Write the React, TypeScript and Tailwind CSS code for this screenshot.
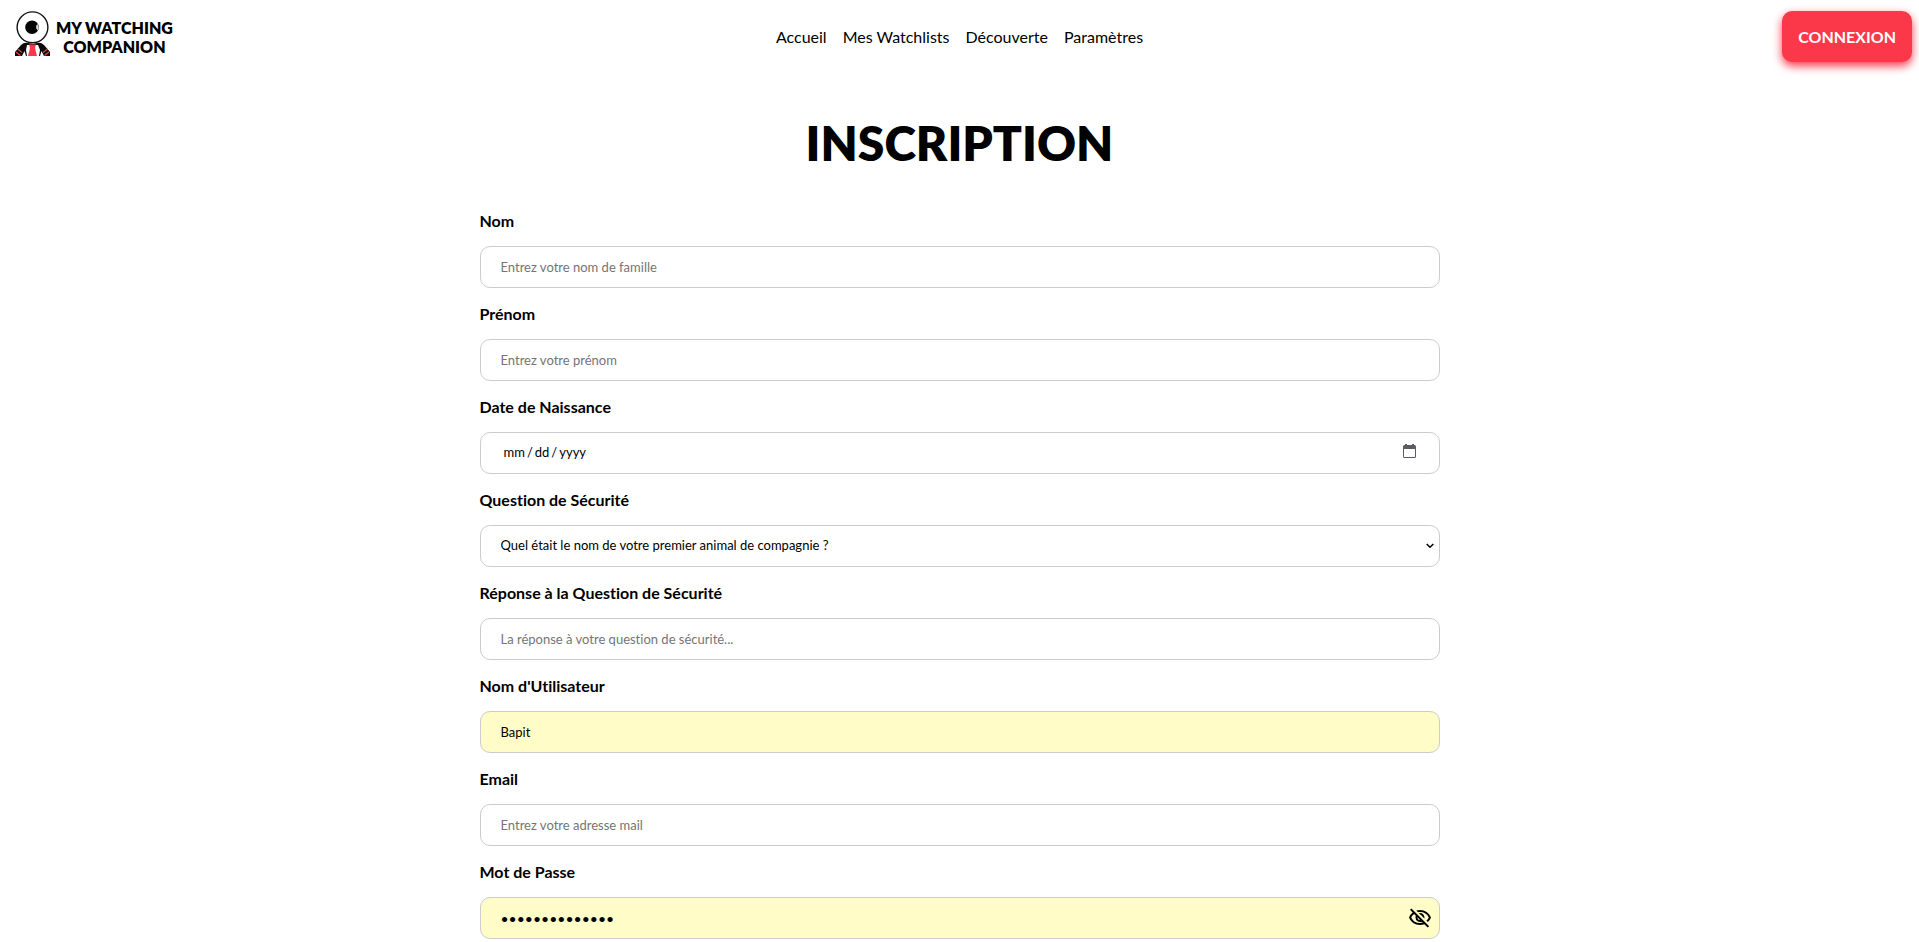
import { useState, type ReactNode } from "react";
import { MdOutlineVisibilityOff, MdOutlineVisibility } from "react-icons/md";

const links = ["Accueil", "Mes Watchlists", "Découverte", "Paramètres"];

const control =
  "block h-[42px] w-full rounded-[10px] border border-[#ccc] px-5 text-black outline-none placeholder:text-[#757575] focus:border-[#fa384a]";

function Mascot() {
  return (
    <svg viewBox="0 0 36 46" className="mb-[5px] h-[46px] w-9" aria-hidden="true">
      <path d="M0 45V41L6 34Q9 31 13 32L18 33L22 32Q26 31 29 34L35 41V45Z" fill="#0b0b0b" />
      <path d="M12 34L18 34L23 34L25 39L24 45H12L11 39Z" fill="#fff" />
      <path d="M14 33.500H21L20 37L22 45H13L15 37Z" fill="#fa384a" />
      <path d="M7 45L9.500 40L11 45ZM29 45L26.500 40L25 45Z" fill="#fff" />
      <path d="M2.500 38L7 41.500M1 41L5.500 44.500M32.500 38L28 41.500M34 41L29.500 44.500" stroke="#fa384a" strokeWidth="1.1" />
      <circle cx="17.5" cy="16.300" r="15.4" fill="#fff" stroke="#111" strokeWidth="1.4" />
      <circle cx="17" cy="16.300" r="6.8" fill="#050505" />
      <path d="M22.500 13Q19.500 16 22.500 19.500Q24.800 16.500 22.500 13Z" fill="#d8d8d8" />
    </svg>
  );
}

function Field({ id, label, children }: { id: string; label: string; children: ReactNode }) {
  return (
    <div className="flex flex-col gap-[15px]">
      <label htmlFor={id} className="text-base leading-5 font-bold">
        {label}
      </label>
      {children}
    </div>
  );
}

export default function App() {
  const [visible, setVisible] = useState(false);
  const Eye = visible ? MdOutlineVisibility : MdOutlineVisibilityOff;

  return (
    <div className="bg-white pb-10 font-[Lato,sans-serif] text-black [font-variant-ligatures:none]">
      <header className="grid grid-cols-[1fr_auto_1fr] items-center px-[7px] pt-[11px]">
        <a href="#" className="flex items-center gap-[5px] justify-self-start pl-2">
          <Mascot />
          <span className="text-center text-base leading-[19px] font-extrabold">
            MY WATCHING
            <br />
            COMPANION
          </span>
        </a>
        <nav className="flex gap-4">
          {links.map((link) => (
            <a key={link} href="#" className="text-base">
              {link}
            </a>
          ))}
        </nav>
        <button
          type="button"
          className="h-[51px] justify-self-end rounded-[10px] bg-[#fa384a] px-4 text-base font-bold text-white shadow-[0_4px_10px_#fa384a]"
        >
          CONNEXION
        </button>
      </header>

      <main className="mx-auto max-w-[960px]">
        <h1 className="pt-[52px] text-center text-5xl leading-[58px] font-extrabold">
          INSCRIPTION
        </h1>
        <form className="flex flex-col gap-4 pt-[39px]">
          <Field id="nom" label="Nom">
            <input
              id="nom"
              className={`${control} text-[13px]`}
              placeholder="Entrez votre nom de famille"
            />
          </Field>
          <Field id="prenom" label="Prénom">
            <input
              id="prenom"
              className={`${control} text-[13px]`}
              placeholder="Entrez votre prénom"
            />
          </Field>
          <Field id="naissance" label="Date de Naissance">
            <div className="relative">
              <input
                id="naissance"
                type="date"
                className={`${control} pl-[22px] text-[13px] [&::-webkit-calendar-picker-indicator]:opacity-0 [&::-webkit-datetime-edit-text]:px-px`}
              />
              <svg
                viewBox="0 0 13 14"
                className="pointer-events-none absolute top-3 right-6 h-3.5 w-[13px]"
                fill="#5b5b66"
                aria-hidden="true"
              >
                <path
                  fillRule="evenodd"
                  d="M2 0H4V1H9V0H11V1H11.5Q13 1 13 2.500V12.500Q13 14 11.500 14H1.500Q0 14 0 12.500V2.500Q0 1 1.500 1H2ZM1 5V12.500Q1 13 1.500 13H11.500Q12 13 12 12.500V5Z"
                />
              </svg>
            </div>
          </Field>
          <Field id="question" label="Question de Sécurité">
            <div className="relative">
              <select id="question" className={`${control} appearance-none bg-white text-[13px]`}>
                <option>Quel était le nom de votre premier animal de compagnie ?</option>
                <option>Quel est le nom de votre ville de naissance ?</option>
              </select>
              <svg
                viewBox="0 0 8 6"
                className="pointer-events-none absolute top-[18px] right-[6px] h-1.5 w-2"
                fill="none"
                stroke="#000"
                strokeWidth="1.5"
                aria-hidden="true"
              >
                <path d="M0.700 1L4 4.300L7.300 1" />
              </svg>
            </div>
          </Field>
          <Field id="reponse" label="Réponse à la Question de Sécurité">
            <input
              id="reponse"
              className={`${control} text-[13px]`}
              placeholder="La réponse à votre question de sécurité..."
            />
          </Field>
          <Field id="utilisateur" label="Nom d'Utilisateur">
            <input
              id="utilisateur"
              className={`${control} bg-[#fffcc8] text-[13px]`}
              defaultValue="Bapit"
            />
          </Field>
          <Field id="email" label="Email">
            <input
              id="email"
              type="email"
              className={`${control} text-[13px]`}
              placeholder="Entrez votre adresse mail"
            />
          </Field>
          <Field id="motdepasse" label="Mot de Passe">
            <div className="relative">
              <input
                id="motdepasse"
                type={visible ? "text" : "password"}
                className={`${control} bg-[#fffcc8] text-sm`}
                defaultValue="motdepasse1234"
              />
              <button
                type="button"
                aria-label="Afficher le mot de passe"
                onClick={() => setVisible(!visible)}
                className="absolute top-[9px] right-2 text-2xl"
              >
                <Eye />
              </button>
            </div>
          </Field>
        </form>
      </main>
    </div>
  );
}
